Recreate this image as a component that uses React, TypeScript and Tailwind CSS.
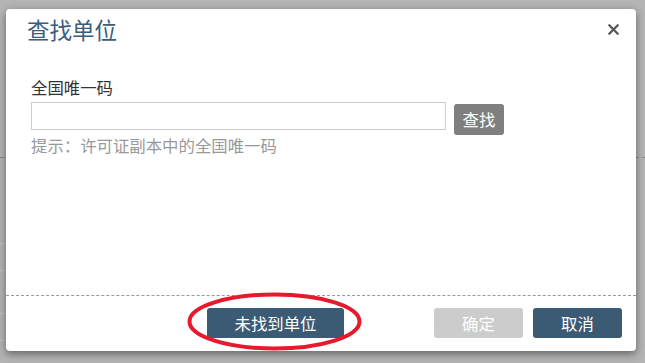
import { X } from 'lucide-react';

const font = { fontFamily: '"Microsoft YaHei", "Noto Sans CJK SC", "Liberation Sans", sans-serif' };

export default function App() {
  return (
    <div className="relative h-[363px] w-[645px] overflow-hidden bg-[#b4b4b4]" style={font}>
      {/* page behind the overlay */}
      <div className="absolute left-0 top-[157px] h-px w-[5px] bg-[#8a8a8a]" />
      <div className="absolute right-0 top-[157px] w-[9px] border-t border-dashed border-[#8a8a8a]" />
      <div className="absolute left-0 top-[243px] h-px w-[6px] bg-[#c4c4c4]" />
      <div className="absolute left-0 top-[270px] h-px w-[6px] bg-[#c4c4c4]" />
      <div className="absolute left-0 top-[313px] h-px w-[6px] bg-[#c4c4c4]" />
      <div className="absolute left-0 top-[340px] h-px w-[6px] bg-[#c4c4c4]" />

      {/* dialog */}
      <div className="absolute left-[6px] top-[9px] flex h-[342px] w-[630px] flex-col rounded-[4px] bg-white shadow-[0_3px_9px_rgba(0,0,0,0.45)]">
        <div className="flex h-[67px] items-start justify-between pl-[21px] pr-[14px] pt-[3px]">
          <h2 className="text-[22.5px] leading-[34px] text-[#3b5d7c]">查找单位</h2>
          <button className="mt-[9px] text-[#555]">
            <X size={17} strokeWidth={3.2} />
          </button>
        </div>

        <div className="flex-1 pl-[25px]">
          <div className="text-[16.4px] leading-[22px] text-[#333]">全国唯一码</div>
          <div className="mt-[4px] flex items-start gap-[8px]">
            <input className="h-[28px] w-[415px] border border-[#cccccc] px-2 outline-none" />
            <button className="mt-[2px] h-[31px] w-[50px] rounded-[3px] bg-[#7f7f7f] text-[16.4px] text-white">查找</button>
          </div>
          <div className="-mt-[1px] text-[16.4px] leading-[22px] text-[#999]">提示：许可证副本中的全国唯一码</div>
        </div>

        <div className="border-t border-dashed border-[#999] pb-[13px] pr-[14px] pt-[12px]">
          <div className="flex items-center">
            <button className="ml-[201px] h-[30px] w-[137px] rounded-[3px] bg-[#3b5a74] text-[16.4px] text-white">未找到单位</button>
            <div className="ml-auto flex gap-[10px]">
              <button className="h-[30px] w-[89px] rounded-[3px] bg-[#cccccc] text-[16.4px] text-white">确定</button>
              <button className="h-[30px] w-[89px] rounded-[3px] bg-[#3b5a74] text-[16.4px] text-white">取消</button>
            </div>
          </div>
        </div>
      </div>

      {/* red annotation */}
      <svg className="pointer-events-none absolute left-0 top-0" width="645" height="363">
        <ellipse cx="274.5" cy="321.5" rx="85" ry="27" fill="none" stroke="#e8192c" strokeWidth="4" />
      </svg>
    </div>
  );
}
